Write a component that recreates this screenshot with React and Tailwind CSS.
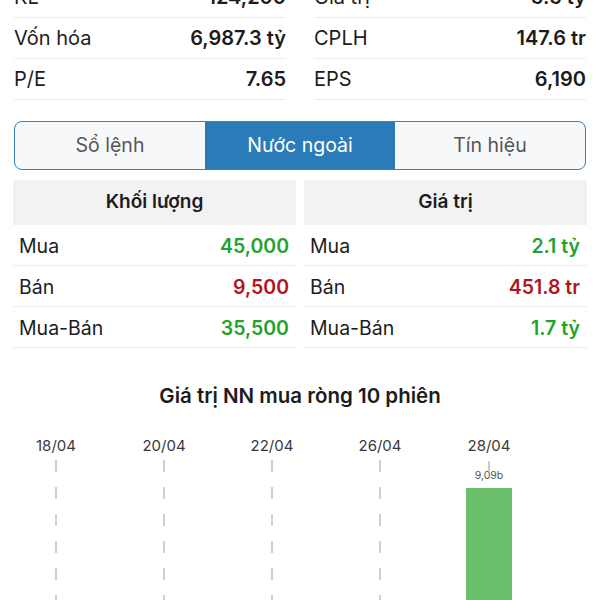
import React from "react";

const topRows = [
  [
    { label: "KL", value: "124,200" },
    { label: "Giá trị", value: "5.5 tỷ" },
  ],
  [
    { label: "Vốn hóa", value: "6,987.3 tỷ" },
    { label: "CPLH", value: "147.6 tr" },
  ],
  [
    { label: "P/E", value: "7.65" },
    { label: "EPS", value: "6,190" },
  ],
];

const tabs = ["Sổ lệnh", "Nước ngoài", "Tín hiệu"];

const GREEN = "text-[#1fa32c]";
const RED = "text-[#b0141c]";

const foreign = [
  {
    title: "Khối lượng",
    rows: [
      { label: "Mua", value: "45,000", color: GREEN },
      { label: "Bán", value: "9,500", color: RED },
      { label: "Mua-Bán", value: "35,500", color: GREEN },
    ],
  },
  {
    title: "Giá trị",
    rows: [
      { label: "Mua", value: "2.1 tỷ", color: GREEN },
      { label: "Bán", value: "451.8 tr", color: RED },
      { label: "Mua-Bán", value: "1.7 tỷ", color: GREEN },
    ],
  },
];

const dates = [
  { x: 56, label: "18/04" },
  { x: 164, label: "20/04" },
  { x: 272, label: "22/04" },
  { x: 380, label: "26/04" },
  { x: 489, label: "28/04", bar: true },
];

// net buy chart, only the top part is visible
const NetChart = () => (
  <svg width="600" height="190" viewBox="0 0 600 190" className="block">
    {dates.map((d) => (
      <g key={d.label}>
        <text
          x={d.x}
          y="31"
          textAnchor="middle"
          fontSize="15"
          fill="#3a3a3c"
          fontFamily="Inter, sans-serif"
        >
          {d.label}
        </text>
        {!d.bar && (
          <line
            x1={d.x}
            y1="40"
            x2={d.x}
            y2="190"
            stroke="#c4c4c6"
            strokeWidth="1.6"
            strokeDasharray="12 15"
          />
        )}
      </g>
    ))}
    <line x1="489" y1="41" x2="489" y2="51" stroke="#9a9a9c" strokeWidth="1" />
    <text
      x="489"
      y="59"
      textAnchor="middle"
      fontSize="10.5"
      fill="#555"
      fontFamily="Inter, sans-serif"
    >
      9,09b
    </text>
    <rect x="466" y="68" width="46" height="130" fill="#6cbf6a" />
  </svg>
);

export default function App() {
  return (
    <div className="h-[600px] w-[600px] overflow-hidden bg-white font-['Inter',sans-serif] text-[#1c1c1e]">
      {/* Summary */}
      <div className="-mt-[23px] grid grid-cols-2 gap-[28px] px-[14px]">
        {[0, 1].map((col) => (
          <div key={col} className="flex flex-col">
            {topRows.map((row) => (
              <div
                key={row[col].label}
                className="flex h-10 box-content items-center justify-between border-b border-[#ececee] text-[20px]"
              >
                <span>{row[col].label}</span>
                <span className="font-semibold">{row[col].value}</span>
              </div>
            ))}
          </div>
        ))}
      </div>

      {/* Tabs */}
      <div className="mx-[14px] mt-[21px] flex h-[49px] overflow-hidden rounded-lg border-[1.5px] border-[#3b7fb6] bg-[#f7f8f9]">
        {tabs.map((t, i) => (
          <div
            key={t}
            className={`flex flex-1 items-center justify-center text-[19.5px] ${
              i === 1 ? "bg-[#2b7bb8] text-white" : "text-[#555558]"
            }`}
          >
            {t}
          </div>
        ))}
      </div>

      {/* Foreign trading */}
      <div className="mt-[10px] grid grid-cols-2 gap-[8px] px-[13px]">
        {foreign.map((block) => (
          <div key={block.title} className="flex flex-col">
            <div className="flex h-[45px] items-center justify-center bg-[#f2f2f3] text-[19px] font-semibold">
              {block.title}
            </div>
            {block.rows.map((r) => (
              <div
                key={r.label}
                className="flex h-[37px] box-content items-center justify-between border-b border-[#ececee] pl-[6px] pr-[7px] pt-[3px] text-[19.5px]"
              >
                <span>{r.label}</span>
                <span className={`font-semibold ${r.color}`}>{r.value}</span>
              </div>
            ))}
          </div>
        ))}
      </div>

      {/* Chart */}
      <div className="mt-[34px] text-center text-[20.5px] font-semibold leading-7">
        Giá trị NN mua ròng 10 phiên
      </div>
      <div className="mt-[10px]">
        <NetChart />
      </div>
    </div>
  );
}
